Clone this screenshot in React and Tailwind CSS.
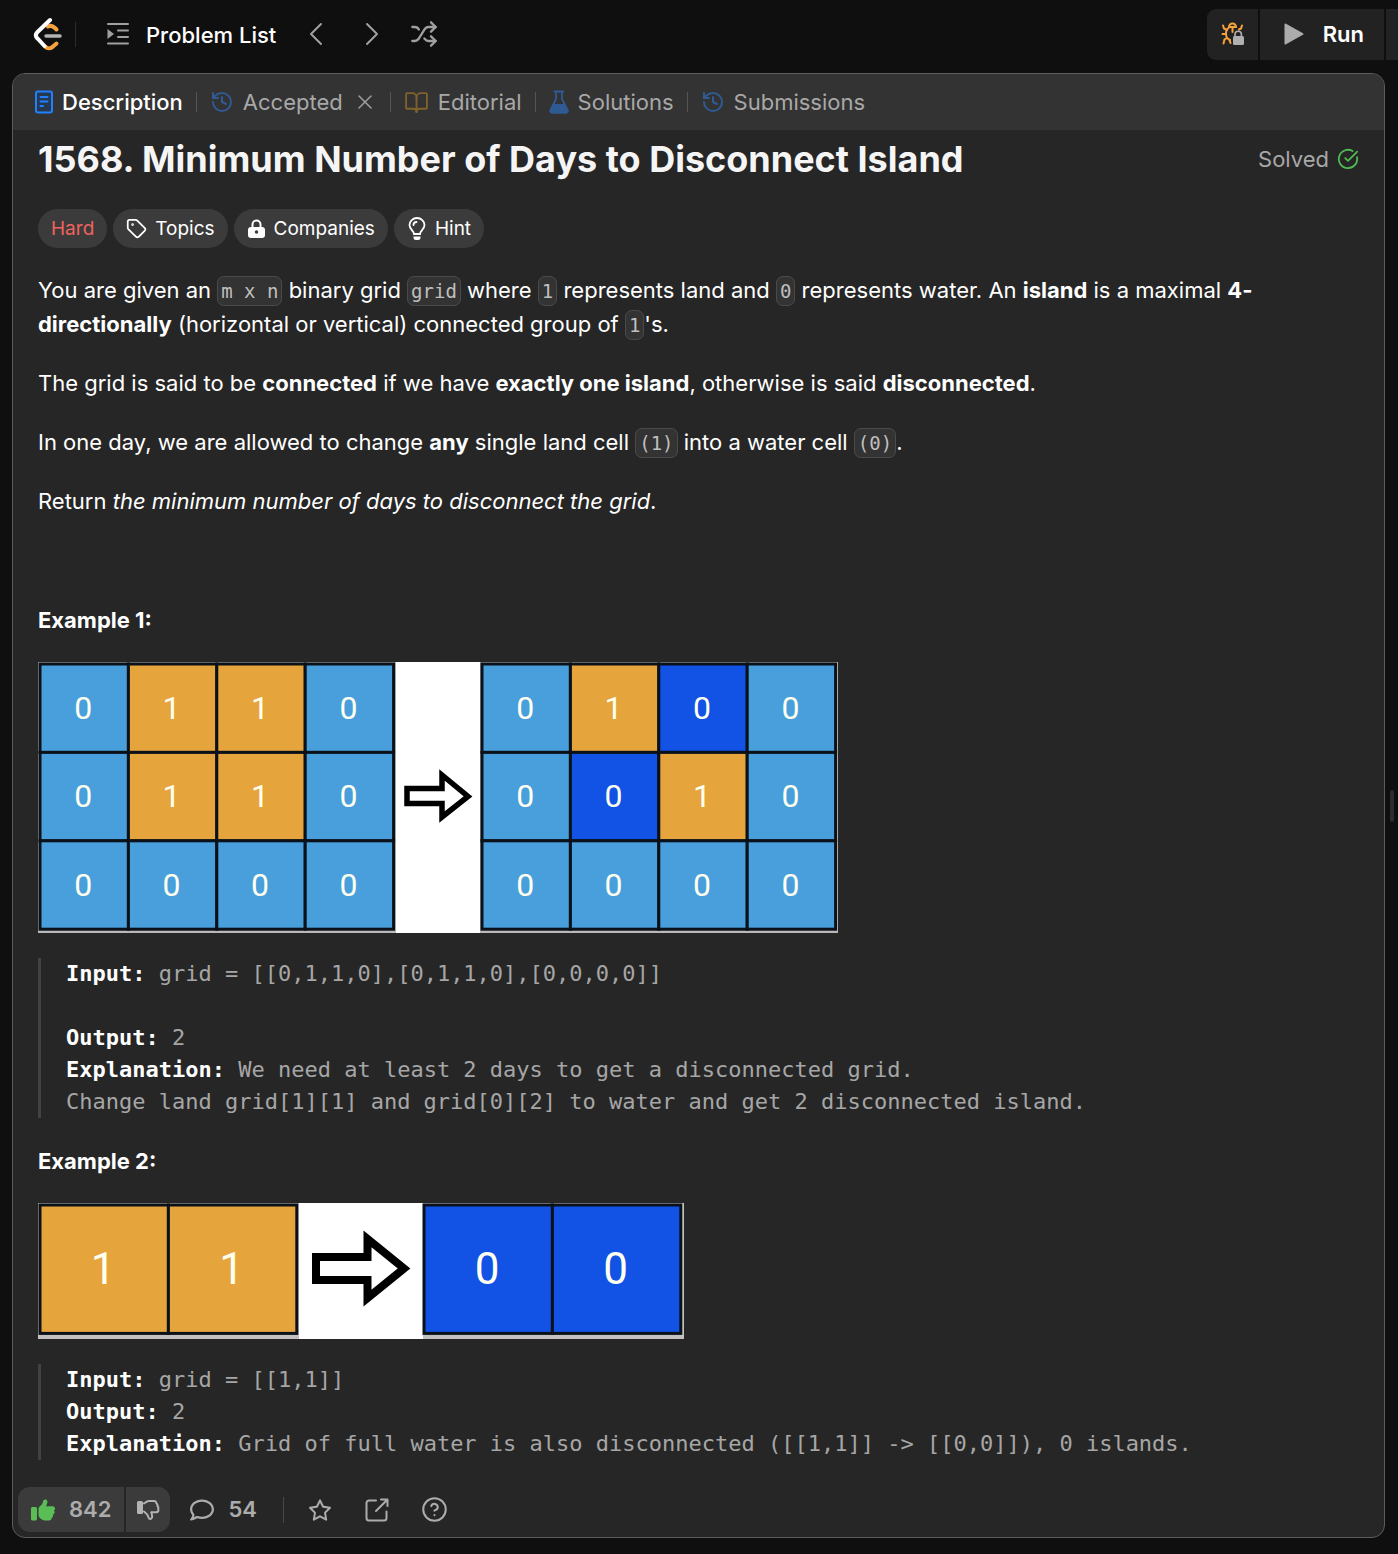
import React from "react";
import {
  BookOpen,
  CircleCheckBig,
  CircleHelp,
  History,
  Shuffle,
  Tag,
  X,
} from "lucide-react";
import { FaRegComment, FaRegStar, FaThumbsUp } from "react-icons/fa6";

const LIGHT = "#489fdc";
const ORANGE = "#e6a53c";
const BLUE = "#1253e6";

function Logo() {
  return (
    <svg width="30" height="34" viewBox="0 0 30 34" fill="none" strokeWidth="4" strokeLinecap="round" aria-hidden="true">
      <path d="M15 9.500c3-1.500 5-.5 7 1.500l1.500 1.500" stroke="#f5a23c" />
      <path d="M12 29.500c2.500 2.500 6 2 8 0l3.500-3" stroke="#f5a23c" />
      <path d="M17 3L4.500 15c-2 2-2 4.500 0 6.500l7 7.500" stroke="#fff" />
      <path d="M13 19h14" stroke="#b3b3b3" strokeWidth="3.500" />
    </svg>
  );
}

function ListIcon() {
  return (
    <svg width="24" height="24" viewBox="0 0 24 24" fill="none" stroke="#a0a0a0" strokeWidth="2" strokeLinecap="round" aria-hidden="true">
      <path d="M2 2h20M12 8.500H22M12 15H22M2 21.500h20" />
      <path d="M1.500 7l6.500 5-6.500 5z" fill="#a0a0a0" stroke="none" />
    </svg>
  );
}

function Chevron({ d }) {
  return (
    <svg width="16" height="24" viewBox="0 0 16 24" fill="none" stroke="#a0a0a0" strokeWidth="2" strokeLinecap="round" strokeLinejoin="round" aria-hidden="true">
      <path d={d} />
    </svg>
  );
}

function BugLock() {
  return (
    <svg width="24" height="24" viewBox="0 0 24 24" fill="none" strokeLinecap="round" strokeWidth="2" aria-hidden="true">
      <g stroke="#f5a23c">
        <path d="M8 5a3.500 3.500 0 0 1 7 0zM8 5.500C5.500 7 5 9 5 12c0 3 1.500 5 4 6M11.500 6v4" />
        <path d="M2 3.500l1 3 3 1.500M21 3.500l-1 3-2 1M1.500 12H5M2.500 21.500l1-4L6 16M8.500 18l1 3" />
      </g>
      <path d="M14 15v-2.500a3.200 3.200 0 0 1 6.400 0V15" stroke="#b0b0b0" strokeWidth="1.600" />
      <rect x="12" y="14" width="11" height="9" rx="1.500" fill="#b0b0b0" />
    </svg>
  );
}

function PlayIcon() {
  return (
    <svg width="20" height="24" viewBox="0 0 20 24" aria-hidden="true">
      <path d="M1.500 2.500L18.500 12l-17 9.500z" fill="#acacac" stroke="#acacac" strokeWidth="2" strokeLinejoin="round" />
    </svg>
  );
}

function DocIcon() {
  return (
    <svg width="18" height="24" viewBox="0 0 18 24" fill="none" stroke="#2080ff" strokeWidth="2" strokeLinecap="round" aria-hidden="true">
      <rect x="1" y="1.500" width="16" height="21" rx="2" fill="#26384f" />
      <path d="M5.500 7h7M5.500 11.500h7M5.500 16h2.500" />
    </svg>
  );
}

function FlaskIcon() {
  return (
    <svg width="20" height="24" viewBox="0 0 20 24" fill="none" stroke="#2f5a94" strokeWidth="1.800" strokeLinecap="round" strokeLinejoin="round" aria-hidden="true">
      <path d="M5.500 1.500h9M7 1.500V9l-5.500 11c-.7 1.500 0 2.500 1.500 2.500h14c1.500 0 2.200-1 1.500-2.500L13 9V1.500" />
      <path d="M4.500 15h11l3 6-1 1.500h-15l-1-1.500z" fill="#2f5a94" />
    </svg>
  );
}

function LockIcon() {
  return (
    <svg width="19" height="20" viewBox="0 0 19 20" aria-hidden="true">
      <path d="M5.500 9V5.500a4 4 0 0 1 8 0V9" fill="none" stroke="#fff" strokeWidth="2" />
      <rect x="1" y="8" width="17" height="11" rx="3" fill="#fff" />
      <circle cx="9.500" cy="13" r="1.700" fill="#3b3b3b" />
    </svg>
  );
}

function BulbIcon() {
  return (
    <svg width="20" height="24" viewBox="0 0 20 24" fill="none" stroke="#fff" strokeWidth="1.800" strokeLinecap="round" aria-hidden="true">
      <path d="M7 17c0-3-4.500-4.500-4.500-9a7.500 7 0 0 1 15 0c0 4.500-4.500 6-4.500 9z" />
      <path d="M6.500 8C6.500 6 8 5 9.500 5" />
      <path d="M6.500 19.500h7v1a2.500 2.500 0 0 1-2.500 2.500H9a2.500 2.500 0 0 1-2.500-2.500z" fill="#fff" stroke="none" />
    </svg>
  );
}

function ThumbDown() {
  return (
    <svg width="24" height="22" viewBox="0 0 24 22" aria-hidden="true">
      <rect x="1" y="2" width="6" height="13" rx="1.500" fill="#b3b3b3" />
      <path
        d="M8 4.500c2-1.500 3-2.500 5-2.500h5c1.500 0 2.500 1 2.300 2.300 1.200.6 1.500 1.700 1.100 2.800 1 .8 1.200 1.900.8 2.900.6 2-.4 3.300-2 3.300h-5c.6 2 1.300 3.500.8 5.200-.5 1.800-2.700 2-3.300.2C12 16.500 11 14.500 8 12.500"
        fill="none"
        stroke="#b3b3b3"
        strokeWidth="2"
        strokeLinejoin="round"
        strokeLinecap="round"
      />
    </svg>
  );
}

function ShareIcon() {
  return (
    <svg width="24" height="24" viewBox="0 0 24 24" fill="none" stroke="#acacac" strokeWidth="2" strokeLinecap="round" strokeLinejoin="round" aria-hidden="true">
      <path d="M11 2.500H4a2.500 2.500 0 0 0-2.500 2.500v15A2.500 2.500 0 0 0 4 22.500h15a2.500 2.500 0 0 0 2.500-2.500v-6.500" />
      <path d="M16 1.500h6.500V8M22 2L11 13" />
    </svg>
  );
}

function Matrix({ x, y, w, h, rows, size }) {
  return rows.map((row, r) =>
    row.map(([value, fill], c) => (
      <g key={`${r}-${c}`}>
        <rect x={x + c * w} y={y + r * h} width={w} height={h} fill={fill} stroke="#0b1118" strokeWidth="3" />
        <text x={x + c * w + w / 2 - 1} y={y + r * h + h / 2 + size * 0.34} fontSize={size} textAnchor="middle" fill="#fffff0">
          {value}
        </text>
      </g>
    ))
  );
}

const L = [0, LIGHT];
const O = [1, ORANGE];
const B = [0, BLUE];

function FigureOne() {
  return (
    <svg viewBox="0 0 800 271" className="block w-[800px] max-w-full font-['Roboto',sans-serif]" role="img" aria-label="Grid before and after two days">
      <rect width="800" height="271" fill="#fff" />
      <rect width="358" height="271" fill="#b9b9b9" />
      <rect x="442" width="358" height="271" fill="#b9b9b9" />
      <Matrix x={2} y={2} w={88.4} h={88.4} size={32} rows={[[L, O, O, L], [L, O, O, L], [L, L, L, L]]} />
      <path d="M369 126.500h35V113l26 21.500-26 20.500v-13.500h-35z" fill="#fff" stroke="#000" strokeWidth="5.500" />
      <Matrix x={444} y={2} w={88.4} h={88.4} size={32} rows={[[L, O, B, L], [L, B, O, L], [L, L, L, L]]} />
    </svg>
  );
}

function FigureTwo() {
  return (
    <svg viewBox="0 0 646 136" className="block w-[646px] max-w-full font-['Roboto',sans-serif]" role="img" aria-label="Two land cells turned into water">
      <rect width="646" height="136" fill="#fff" />
      <rect width="261" height="136" fill="#c4c0c0" />
      <rect x="385" width="261" height="136" fill="#c4c0c0" />
      <Matrix x={2} y={2} w={128.4} h={128.4} size={44} rows={[[O, O]]} />
      <path d="M278 54h51.500V36L366 65.500 329.500 95V77H278z" fill="#fff" stroke="#000" strokeWidth="8" />
      <Matrix x={386} y={2} w={128.4} h={128.4} size={44} rows={[[B, B]]} />
    </svg>
  );
}

function Code({ children }) {
  return (
    <code className="rounded-[7px] border border-[#4a4a4a] bg-[#333333] px-[3px] py-[3px] font-['DejaVu_Sans_Mono',monospace] text-[19px] leading-none text-[#bfbfbf]">
      {children}
    </code>
  );
}

function Divider() {
  return <span className="h-5 w-px shrink-0 bg-[#555555]" />;
}

function Tab({ icon, active, children }) {
  return (
    <button type="button" className={active ? "flex items-center gap-[9px] font-medium text-white" : "flex items-center gap-[9px] text-[#a8a8a8]"}>
      {icon}
      {children}
    </button>
  );
}

function Pill({ icon, children }) {
  return (
    <button type="button" className="flex h-[39px] items-center gap-2 rounded-full bg-[#3b3b3b] px-[13px]">
      {icon}
      <span className="pt-0.5">{children}</span>
    </button>
  );
}

function Pre({ children }) {
  return (
    <pre className="border-l-[3px] border-[#424242] pl-[25px] font-['DejaVu_Sans_Mono',monospace] text-[22px] leading-8 whitespace-pre-wrap text-[#a6a6a6]">
      {children}
    </pre>
  );
}

function Line({ label, children }) {
  return (
    <span className="block min-h-8">
      {label && <strong className="font-bold text-white">{label}</strong>}
      {label ? " " : ""}
      {children}
    </span>
  );
}

export default function App() {
  return (
    <div className="min-h-screen overflow-hidden bg-[#0f0f0f] pb-4 font-['Inter',sans-serif] text-[22px] text-white">
      <header className="flex h-[68px] items-center justify-between pl-[33px]">
        <nav className="flex items-center">
          <a href="#home" aria-label="Home"><Logo /></a>
          <span className="ml-3 h-[25px] w-px bg-[#2c2c2c]" />
          <button type="button" className="ml-[30px] flex items-center gap-4 font-medium">
            <ListIcon />
            <span className="pt-0.5">Problem List</span>
          </button>
          <button type="button" aria-label="Previous problem" className="ml-8"><Chevron d="M13 2L3 12l10 10" /></button>
          <button type="button" aria-label="Next problem" className="ml-10"><Chevron d="M3 2l10 10L3 22" /></button>
          <button type="button" aria-label="Random problem" className="ml-[30px]"><Shuffle size={28} strokeWidth={2} color="#a0a0a0" /></button>
        </nav>
        <div className="flex h-[51px] gap-0.5">
          <button type="button" aria-label="Debug" className="flex w-[51px] items-center justify-center rounded-l-[9px] bg-[#222222]"><BugLock /></button>
          <button type="button" className="flex w-[124px] items-center justify-end gap-[19px] bg-[#222222] pr-5 font-semibold">
            <PlayIcon />
            Run
          </button>
          <span className="w-3 bg-[#222222]" />
        </div>
      </header>

      <div className="flex pl-3 pt-[5px]">
        <main className="min-w-0 flex-1 overflow-hidden rounded-[13px] border border-[#5c5c5c] bg-[#262626]">
          <div className="flex h-14 items-center gap-[13px] bg-[#333333] px-[22px]">
            <Tab active icon={<DocIcon />}>Description</Tab>
            <Divider />
            <div className="flex items-center gap-[10px]">
              <Tab icon={<History size={24} strokeWidth={2} color="#2f5a94" />}>Accepted</Tab>
              <button type="button" aria-label="Close tab"><X size={24} strokeWidth={1.5} color="#a0a0a0" /></button>
            </div>
            <Divider />
            <Tab icon={<BookOpen size={25} strokeWidth={1.8} color="#80622b" />}>Editorial</Tab>
            <Divider />
            <Tab icon={<FlaskIcon />}>Solutions</Tab>
            <Divider />
            <Tab icon={<History size={24} strokeWidth={2} color="#2f5a94" />}>Submissions</Tab>
          </div>

          <article className="px-[25px] pt-1">
            <div className="flex items-center justify-between">
              <h1 className="text-[36px] leading-[50px] font-bold text-[#f5f5f5]">1568. Minimum Number of Days to Disconnect Island</h1>
              <span className="flex items-center gap-2 text-[#a8a8a8]">
                Solved
                <CircleCheckBig size={22} strokeWidth={2} color="#4fb852" />
              </span>
            </div>

            <div className="mt-[25px] flex gap-1.5 text-[19px]">
              <span className="flex h-[39px] items-center rounded-full bg-[#3b3b3b] px-[13px] pt-0.5 text-[#ef635f]">Hard</span>
              <Pill icon={<Tag size={21} strokeWidth={2} />}>Topics</Pill>
              <Pill icon={<LockIcon />}>Companies</Pill>
              <Pill icon={<BulbIcon />}>Hint</Pill>
            </div>

            <div className="mt-[25px] flex flex-col gap-[26px] leading-[34px]">
              <section className="flex flex-col gap-[25px]">
                <p>
                  You are given an <Code>m x n</Code> binary grid <Code>grid</Code> where <Code>1</Code> represents land and <Code>0</Code> represents water. An <strong>island</strong> is a maximal <strong>4-</strong><strong>directionally</strong> (horizontal or vertical) connected group of <Code>1</Code>'s.
                </p>
                <p>The grid is said to be <strong>connected</strong> if we have <strong>exactly one island</strong>, otherwise is said <strong>disconnected</strong>.</p>
                <p>In one day, we are allowed to change <strong>any</strong> single land cell <Code>(1)</Code> into a water cell <Code>(0)</Code>.</p>
                <p>Return <em>the minimum number of days to disconnect the grid</em>.</p>
                <p>&nbsp;</p>
              </section>

              <section className="flex flex-col gap-[25px]">
                <p><strong>Example 1:</strong></p>
                <FigureOne />
                <Pre>
                  <Line label="Input:">grid = [[0,1,1,0],[0,1,1,0],[0,0,0,0]]</Line>
                  <Line />
                  <Line label="Output:">2</Line>
                  <Line label="Explanation:">We need at least 2 days to get a disconnected grid.</Line>
                  <Line>Change land grid[1][1] and grid[0][2] to water and get 2 disconnected island.</Line>
                </Pre>
              </section>

              <section className="flex flex-col gap-[25px]">
                <p><strong>Example 2:</strong></p>
                <FigureTwo />
                <Pre>
                  <Line label="Input:">grid = [[1,1]]</Line>
                  <Line label="Output:">2</Line>
                  <Line label="Explanation:">{"Grid of full water is also disconnected ([[1,1]] -> [[0,0]]), 0 islands."}</Line>
                </Pre>
              </section>
            </div>
          </article>

          <footer className="mt-[27px] flex items-center px-[5px] pb-[5px] font-semibold text-[#acacac]">
            <div className="flex h-[45px] gap-0.5 overflow-hidden rounded-xl">
              <button type="button" className="flex items-center gap-[14px] bg-[#3b3b3b] px-[13px]">
                <FaThumbsUp size={24} color="#5bbd56" />
                842
              </button>
              <button type="button" aria-label="Dislike" className="flex w-11 items-center justify-center bg-[#3b3b3b]"><ThumbDown /></button>
            </div>
            <button type="button" className="ml-5 flex items-center gap-[14px]">
              <FaRegComment size={24} />
              54
            </button>
            <span className="ml-[26px] h-[26px] w-px bg-[#474747]" />
            <button type="button" aria-label="Favorite" className="ml-6"><FaRegStar size={24} /></button>
            <button type="button" aria-label="Share" className="ml-[33px]"><ShareIcon /></button>
            <button type="button" aria-label="Help" className="ml-8"><CircleHelp size={27} strokeWidth={1.8} /></button>
          </footer>
        </main>
        <div className="flex w-[13px] items-center justify-center">
          <span className="h-8 w-1 rounded-full bg-[#2c2c2c]" />
        </div>
      </div>
    </div>
  );
}
